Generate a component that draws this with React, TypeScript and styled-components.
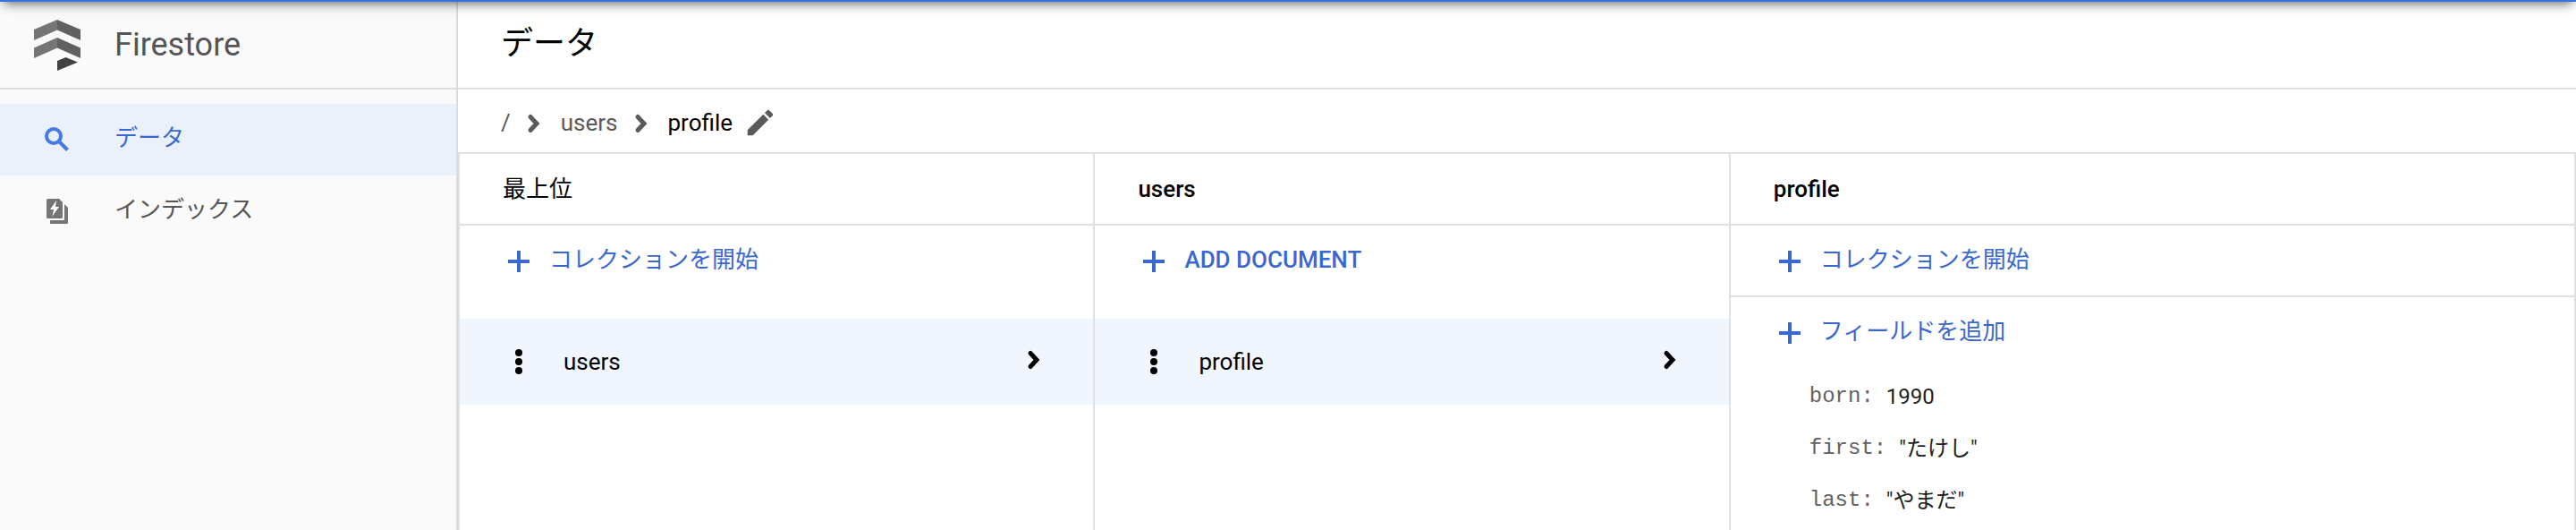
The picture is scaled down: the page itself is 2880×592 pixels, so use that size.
import React from 'react';
import styled, { createGlobalStyle } from 'styled-components';

const LINE = '#e0e0e0';
const LINK = '#3b68cf';

const GlobalStyle = createGlobalStyle`
  *, *::before, *::after { box-sizing: border-box; }
  body {
    margin: 0;
    background: #fff;
    color: #000;
    font-family: Roboto, "Noto Sans CJK JP", sans-serif;
    font-size: 26px;
    line-height: 40px;
  }
  h1, h2, dl, dd, ol { margin: 0; padding: 0; }
  a { color: inherit; text-decoration: none; }
  button {
    margin: 0;
    border: 0;
    background: none;
    color: inherit;
    font: inherit;
    cursor: pointer;
  }
`;

const Page = styled.div`
  position: relative;
  display: flex;
  min-height: 100vh;
  overflow: hidden;
`;

const AppBarEdge = styled.div`
  position: absolute;
  top: -46px;
  left: 0;
  right: 0;
  height: 48px;
  background: #3273e0;
  box-shadow: 0 6px 12px -4px rgba(0, 0, 0, 0.6);
`;

const Sidebar = styled.aside`
  flex: 0 0 512px;
  background: #fafafa;
  border-right: 2px solid #dcdcdc;
`;

const Brand = styled.div`
  display: flex;
  align-items: center;
  height: 100px;
  padding-left: 36px;
  gap: 36px;
  border-bottom: 2px solid #dcdcdc;
`;

const BrandName = styled.span`
  padding-top: 2px;
  color: #555;
  font-size: 36px;
`;

const Nav = styled.nav`
  padding-top: 16px;
`;

const NavLink = styled.a<{ $active?: boolean }>`
  display: flex;
  align-items: center;
  gap: 46px;
  height: 80px;
  padding-left: 46px;
  background: ${(p) => (p.$active ? '#ebf1fa' : 'transparent')};
  color: ${(p) => (p.$active ? LINK : '#555')};
`;

const Label = styled.span`
  padding-bottom: 4px;
`;

const Main = styled.main`
  flex: 1;
  min-width: 0;
  display: flex;
  flex-direction: column;
`;

const TitleBar = styled.header`
  display: flex;
  align-items: center;
  height: 100px;
  padding-left: 48px;
  border-bottom: 2px solid ${LINE};
`;

const Title = styled.h1`
  font-size: 36px;
  font-weight: 400;
`;

const Breadcrumb = styled.nav`
  display: flex;
  align-items: center;
  gap: 12px;
  height: 72px;
  padding: 4px 48px 0;
  border-bottom: 2px solid ${LINE};
  color: #5a5a5a;
`;

const Crumbs = styled.ol`
  display: flex;
  align-items: center;
  gap: 12px;
  list-style: none;
`;

const Crumb = styled.li`
  display: flex;
  align-items: center;
  gap: 8px;
`;

const CurrentCrumb = styled.span`
  color: #000;
`;

const EditButton = styled.button`
  display: flex;
  padding: 0;
`;

const Columns = styled.div`
  flex: 1;
  display: grid;
  grid-template-columns: 3fr 3fr 4fr;
`;

const Column = styled.section`
  min-width: 0;
  border-left: 2px solid ${LINE};

  &:last-child {
    border-right: 2px solid ${LINE};
  }
`;

const ColumnHeader = styled.h2<{ $strong?: boolean }>`
  display: flex;
  align-items: center;
  height: 80px;
  padding-left: 48px;
  border-bottom: 2px solid ${LINE};
  font-size: 26px;
  font-weight: ${(p) => (p.$strong ? 500 : 400)};
`;

const AddButton = styled.button<{ $divided?: boolean; $strong?: boolean }>`
  display: flex;
  align-items: center;
  gap: 16px;
  width: 100%;
  height: 80px;
  padding: 0 48px;
  color: ${LINK};
  font-weight: ${(p) => (p.$strong ? 500 : 400)};
  box-shadow: ${(p) => (p.$divided ? `inset 0 -2px ${LINE}` : 'none')};
`;

const Item = styled.div`
  display: flex;
  align-items: center;
  height: 96px;
  margin-top: 24px;
  padding: 0 48px;
  gap: 32px;
  background: #f0f5fe;
`;

const MenuButton = styled.button`
  display: flex;
  padding: 0;
`;

const ItemLink = styled.a`
  flex: 1;
  display: flex;
  align-items: center;
  justify-content: space-between;
`;

const Fields = styled.dl`
  padding: 2px 0 0 88px;
  font-size: 24px;
`;

const Field = styled.div`
  display: flex;
  align-items: center;
  height: 58px;
  gap: 14px;
`;

const FieldName = styled.dt`
  color: #616161;
  font-family: "Liberation Mono", monospace;
`;

const FieldValue = styled.dd`
  color: #212121;
`;

const Icon = styled.svg<{ $size?: number }>`
  display: block;
  flex: none;
  width: ${(p) => p.$size ?? 36}px;
  height: ${(p) => p.$size ?? 36}px;
`;

const LogoSvg = styled.svg`
  flex: none;
  width: 56px;
  height: 60px;
`;

const FirestoreLogo = () => (
  <LogoSvg viewBox="0 0 56 60" aria-hidden="true">
    <path fill="#757575" d="M2 14 28 3v11.500L2 26zM2 34.500 28 23v11.500L2 46z" />
    <path fill="#616161" d="M54 14 28 3v11.500L54 26zM54 34.500 28 23v11.500L54 46z" />
    <path fill="#424242" d="M28 49 37.500 45 51 50.500 28 60z" />
  </LogoSvg>
);

const SearchIcon = () => (
  <Icon viewBox="0 0 36 36" fill="none" stroke="#467ae2" strokeWidth="4" aria-hidden="true">
    <circle cx="14" cy="14" r="8" />
    <path d="M19 19 29.500 29.500" />
  </Icon>
);

const IndexIcon = () => (
  <Icon viewBox="0 0 36 36" fill="#757575" aria-hidden="true">
    <path d="M7.500 4H20l4 4v16.500a1.500 1.500 0 0 1-1.500 1.500h-15A1.500 1.500 0 0 1 6 24.500v-19A1.500 1.500 0 0 1 7.500 4z" />
    <path d="M26 10l4 4v16.500a1.500 1.500 0 0 1-1.500 1.500H10v-4h16z" />
    <path fill="#fff" d="M17 6 10 16h4l-1.500 7.500L20 13h-4z" />
  </Icon>
);

const ChevronIcon = ({ top = 0 }: { top?: number }) => (
  <Icon
    viewBox={`0 ${top} 36 36`}
    fill="none"
    stroke="currentColor"
    strokeWidth="5"
    strokeLinecap="round"
    aria-hidden="true"
  >
    <path d="M14 10.500 21 18l-7 7.500" />
  </Icon>
);

const EditIcon = () => (
  <Icon viewBox="0 0 24 24" $size={38} fill="currentColor" aria-hidden="true">
    <path d="M3 17.250V21h3.750L17.810 9.940l-3.750-3.750L3 17.250zM20.710 7.040a1 1 0 0 0 0-1.410l-2.340-2.340a1 1 0 0 0-1.410 0l-1.830 1.830 3.750 3.750 1.830-1.830z" />
  </Icon>
);

const PlusIcon = () => (
  <Icon viewBox="0 0 36 36" fill="currentColor" aria-hidden="true">
    <path d="M16 6h4v10h10v4H20v10h-4V20H6v-4h10z" />
  </Icon>
);

const MoreIcon = () => (
  <Icon viewBox="0 0 36 36" fill="currentColor" aria-hidden="true">
    <circle cx="18" cy="8" r="4" />
    <circle cx="18" cy="18" r="4" />
    <circle cx="18" cy="28" r="4" />
  </Icon>
);

const SelectedItem = ({ name }: { name: string }) => (
  <Item>
    <MenuButton type="button" aria-label="メニュー">
      <MoreIcon />
    </MenuButton>
    <ItemLink href="#">
      {name}
      <ChevronIcon top={2} />
    </ItemLink>
  </Item>
);

const fields = [
  { name: 'born', value: '1990' },
  { name: 'first', value: '"たけし"' },
  { name: 'last', value: '"やまだ"' },
];

export default function App() {
  return (
    <>
      <GlobalStyle />
      <Page lang="ja">
        <Sidebar>
          <Brand>
            <FirestoreLogo />
            <BrandName>Firestore</BrandName>
          </Brand>
          <Nav>
            <NavLink href="#" $active aria-current="page">
              <SearchIcon />
              <Label>データ</Label>
            </NavLink>
            <NavLink href="#">
              <IndexIcon />
              <Label>インデックス</Label>
            </NavLink>
          </Nav>
        </Sidebar>
        <Main>
          <TitleBar>
            <Title>データ</Title>
          </TitleBar>
          <Breadcrumb>
            <Crumbs>
              <Crumb>
                <a href="#">/</a>
                <ChevronIcon top={-1} />
              </Crumb>
              <Crumb>
                <a href="#">users</a>
                <ChevronIcon top={-1} />
              </Crumb>
              <Crumb>
                <CurrentCrumb aria-current="page">profile</CurrentCrumb>
              </Crumb>
            </Crumbs>
            <EditButton type="button" aria-label="編集">
              <EditIcon />
            </EditButton>
          </Breadcrumb>
          <Columns>
            <Column>
              <ColumnHeader>最上位</ColumnHeader>
              <AddButton type="button">
                <PlusIcon />
                <Label>コレクションを開始</Label>
              </AddButton>
              <SelectedItem name="users" />
            </Column>
            <Column>
              <ColumnHeader $strong>users</ColumnHeader>
              <AddButton type="button" $strong>
                <PlusIcon />
                <Label>ADD DOCUMENT</Label>
              </AddButton>
              <SelectedItem name="profile" />
            </Column>
            <Column>
              <ColumnHeader $strong>profile</ColumnHeader>
              <AddButton type="button" $divided>
                <PlusIcon />
                <Label>コレクションを開始</Label>
              </AddButton>
              <AddButton type="button">
                <PlusIcon />
                <Label>フィールドを追加</Label>
              </AddButton>
              <Fields>
                {fields.map((field) => (
                  <Field key={field.name}>
                    <FieldName>{field.name}:</FieldName>
                    <FieldValue>{field.value}</FieldValue>
                  </Field>
                ))}
              </Fields>
            </Column>
          </Columns>
        </Main>
        <AppBarEdge />
      </Page>
    </>
  );
}
